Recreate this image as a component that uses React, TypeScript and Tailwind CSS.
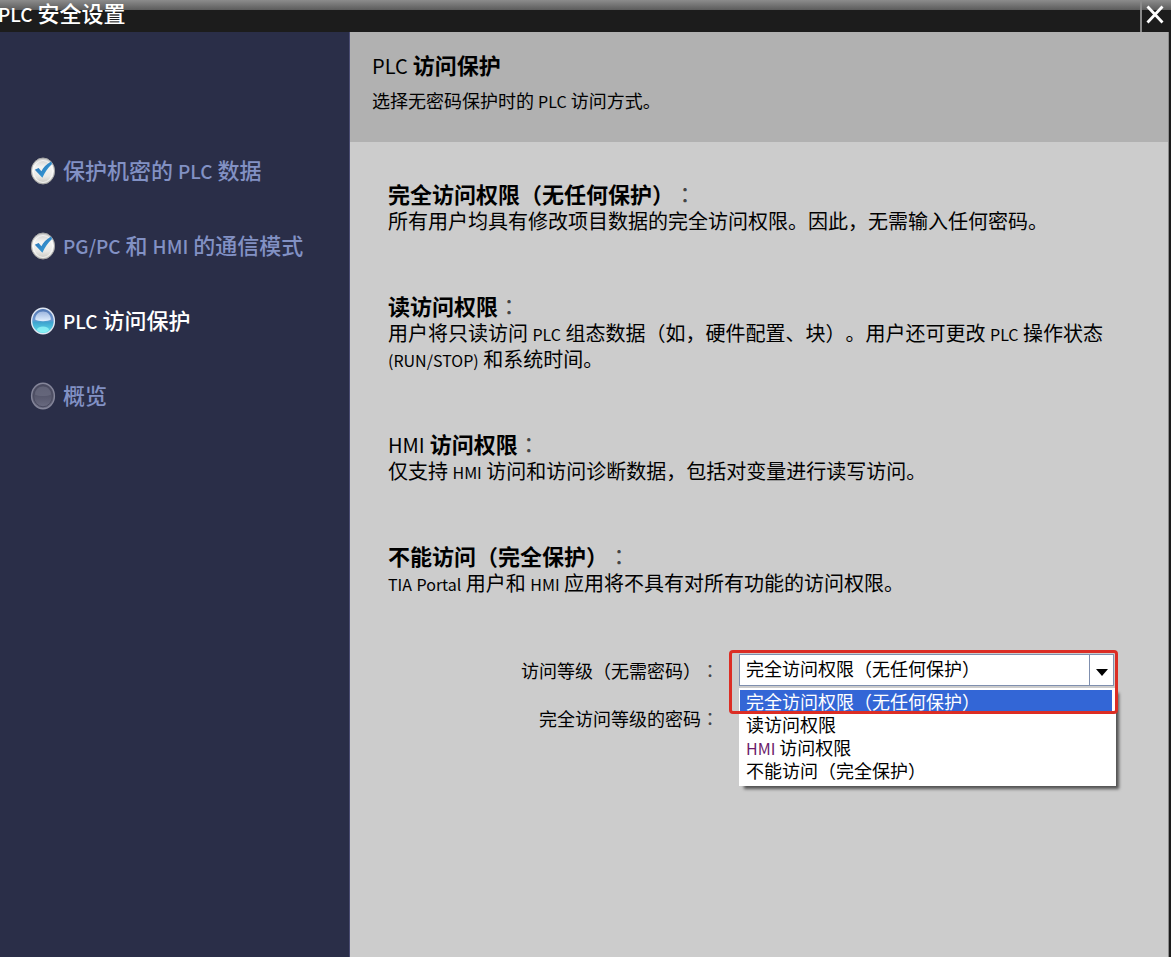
import { useState } from 'react'
import type { ReactNode } from 'react'

type StepState = 'done' | 'current' | 'pending'

const steps: { label: string; state: StepState }[] = [
  { label: '保护机密的 PLC 数据', state: 'done' },
  { label: 'PG/PC 和 HMI 的通信模式', state: 'done' },
  { label: 'PLC 访问保护', state: 'current' },
  { label: '概览', state: 'pending' },
]

const sections = [
  {
    title: '完全访问权限（无任何保护）：',
    text: '所有用户均具有修改项目数据的完全访问权限。因此，无需输入任何密码。',
  },
  {
    title: '读访问权限：',
    text: '用户将只读访问 PLC 组态数据（如，硬件配置、块）。用户还可更改 PLC 操作状态 (RUN/STOP) 和系统时间。',
  },
  {
    title: 'HMI 访问权限：',
    text: '仅支持 HMI 访问和访问诊断数据，包括对变量进行读写访问。',
  },
  {
    title: '不能访问（完全保护）：',
    text: 'TIA Portal 用户和 HMI 应用将不具有对所有功能的访问权限。',
  },
]

const levels = [
  '完全访问权限（无任何保护）',
  '读访问权限',
  'HMI 访问权限',
  '不能访问（完全保护）',
]

// Latin words are set smaller than the Chinese text, colons are centred in their cell
function Mixed({ text, latin }: { text: string; latin: string }) {
  const parts: ReactNode[] = text.split(/([A-Za-z()/]+|：)/).map((part, i) => {
    if (part === '：') {
      return (
        <span key={i} className="font-['Noto_Sans_CJK_TC',sans-serif] leading-none font-normal text-[#444]">
          {part}
        </span>
      )
    }
    if (/^[A-Za-z()/]+$/.test(part)) {
      return (
        <span key={i} className={latin}>
          {part}
        </span>
      )
    }
    return part
  })
  return <>{parts}</>
}

function StepIcon({ state }: { state: StepState }) {
  return (
    <svg viewBox="0 0 26 28" className="h-7 w-[26px] shrink-0" aria-hidden="true">
      <defs>
        <linearGradient id="done-fill" x1="0" y1="0" x2="0" y2="1">
          <stop offset="0" stopColor="#c9c9c9" />
          <stop offset="0.35" stopColor="#f4f4f2" />
          <stop offset="0.7" stopColor="#e9e9e6" />
          <stop offset="1" stopColor="#c4c4be" />
        </linearGradient>
        <linearGradient id="current-fill" x1="0" y1="0" x2="0" y2="1">
          <stop offset="0" stopColor="#4f74b0" />
          <stop offset="0.45" stopColor="#6d98d2" />
          <stop offset="0.55" stopColor="#3fa3cf" />
          <stop offset="1" stopColor="#5fe6ee" />
        </linearGradient>
        <linearGradient id="current-shine" x1="0" y1="0" x2="0" y2="1">
          <stop offset="0" stopColor="#9db6de" />
          <stop offset="1" stopColor="#e2f0ff" />
        </linearGradient>
        <linearGradient id="pending-fill" x1="0" y1="0" x2="0" y2="1">
          <stop offset="0" stopColor="#4c4d62" />
          <stop offset="0.5" stopColor="#56576c" />
          <stop offset="1" stopColor="#6d6e84" />
        </linearGradient>
        <linearGradient id="check-fill" x1="0" y1="0" x2="1" y2="1">
          <stop offset="0" stopColor="#2c6fb3" />
          <stop offset="1" stopColor="#35a3dd" />
        </linearGradient>
      </defs>
      {state === 'done' && (
        <>
          <ellipse cx="13" cy="14" rx="11.6" ry="13" fill="url(#done-fill)" stroke="#a5a5a5" strokeWidth="1" />
          <ellipse cx="13" cy="14.5" rx="9.6" ry="11" fill="none" stroke="#ffffff" strokeOpacity="0.7" />
          <path d="M4.8 12.8 L8.6 11 L11.4 14.2 C13.4 10.6 16 7.6 21.2 4.6 L22 7 C17.8 10.8 15 15 12.4 20.8 Z" fill="url(#check-fill)" />
        </>
      )}
      {state === 'current' && (
        <>
          <ellipse cx="13" cy="14" rx="11.4" ry="12.8" fill="url(#current-fill)" stroke="#dfe6f2" strokeWidth="1.4" />
          <path d="M5.2 12.5 C5.2 7.6 8.4 4.4 13 4.4 C17.6 4.4 20.8 7.6 20.8 12.5 C18 14.8 8 14.8 5.2 12.5 Z" fill="url(#current-shine)" />
          <ellipse cx="13" cy="22.5" rx="6" ry="3" fill="#9bfbfb" fillOpacity="0.7" />
        </>
      )}
      {state === 'pending' && (
        <>
          <ellipse cx="13" cy="14" rx="11.4" ry="12.8" fill="url(#pending-fill)" stroke="#85869a" strokeWidth="1.4" />
          <ellipse cx="13" cy="14" rx="9.4" ry="10.8" fill="none" stroke="#4a4b60" strokeWidth="1" />
          <path d="M5 12.5 C5 8 8.5 4.6 13 4.6 C17.5 4.6 21 8 21 12.5 C18 14.6 8 14.6 5 12.5 Z" fill="#74758a" fillOpacity="0.5" />
        </>
      )}
    </svg>
  )
}

function TitleBar() {
  return (
    <header className="flex h-8 items-stretch justify-between bg-[linear-gradient(#8c8c8c_0px,#5c5c5c_10px,#1c1c1c_10px)]">
      <h1 className="-ml-0.5 text-[22px] leading-6 font-medium whitespace-nowrap text-white">
        <Mixed text="PLC 安全设置" latin="text-[19px]/none" />
      </h1>
      <button
        type="button"
        aria-label="关闭"
        className="flex w-[31px] items-center justify-center border-l-2 border-[#8a8a8a] pr-1 pb-0.5 text-white"
      >
        <svg viewBox="0 0 18 20" className="h-5 w-[18px]" fill="none" stroke="currentColor" strokeWidth="2.8">
          <path d="M1.5 1.5 L16.5 17.5 M16.5 1.5 L1.5 17.5" />
        </svg>
      </button>
    </header>
  )
}

function Sidebar() {
  return (
    <nav className="w-[350px] shrink-0 border-r border-[#4a4c72] bg-[#2a2e48] pt-[123px] pl-[30px]">
      <ul className="space-y-[43px]">
        {steps.map((step) => (
          <li key={step.label}>
            <button
              type="button"
              aria-current={step.state === 'current' ? 'step' : undefined}
              className={`flex h-8 items-center gap-[7px] text-[22px] leading-7 font-medium whitespace-nowrap ${
                step.state === 'current' ? 'text-white' : 'text-[#8291c4]'
              }`}
            >
              <StepIcon state={step.state} />
              <span className="pb-1">
                <Mixed text={step.label} latin="text-[19px]/none" />
              </span>
            </button>
          </li>
        ))}
      </ul>
    </nav>
  )
}

function AccessForm() {
  const [level, setLevel] = useState(levels[0])
  const [password, setPassword] = useState('')

  return (
    <form className="grid grid-cols-[331px_1fr] gap-x-5 gap-y-4 pt-0.5 text-lg leading-6">
      <label htmlFor="level" className="flex h-8 items-center justify-end">
        <span>
          <Mixed text="访问等级（无需密码）：" latin="text-base/none" />
        </span>
      </label>
      <div className="relative">
        <select
          id="level"
          value={level}
          onChange={(e) => setLevel(e.target.value)}
          className="h-8 w-full appearance-none border border-[#7f8fae] bg-white pr-8 pb-1 pl-1.5 text-lg leading-6 text-black outline-none"
        >
          {levels.map((item) => (
            <option key={item} value={item}>
              {item}
            </option>
          ))}
        </select>
        <span className="pointer-events-none absolute inset-y-0 right-0 flex w-[25px] items-center justify-center border border-[#7f8fae]">
          <svg viewBox="0 0 12 7" className="mt-1 h-[7px] w-3" aria-hidden="true">
            <path d="M0 0 H12 L6 7 Z" fill="#000" />
          </svg>
        </span>

        {/* 下拉列表 */}
        <ul
          role="listbox"
          className="absolute top-[34px] -right-0.5 left-0 z-10 bg-white pt-0.5 pb-1 leading-[23px] shadow-[4px_4px_3px_-1px_rgba(0,0,0,0.6)]"
        >
          {levels.map((item) => (
            <li
              key={item}
              role="option"
              aria-selected={item === level}
              onClick={() => setLevel(item)}
              className={`mr-1 ml-px cursor-default pl-1.5 whitespace-nowrap ${
                item === level ? 'bg-[#3366d6] text-white' : 'text-black'
              }`}
            >
              <Mixed text={item} latin="text-base/none text-[#6b1a6b]" />
            </li>
          ))}
        </ul>
        <div className="pointer-events-none absolute -top-1 -right-1 -left-2.5 z-20 h-16 rounded-sm border-3 border-[#dc2d24]" />
      </div>

      <label htmlFor="password" className="flex h-8 items-center justify-end">
        <span>
          <Mixed text="完全访问等级的密码：" latin="text-base/none" />
        </span>
      </label>
      <input
        id="password"
        type="password"
        value={password}
        onChange={(e) => setPassword(e.target.value)}
        className="h-8 w-full border border-[#7f8fae] bg-white px-1.5 outline-none"
      />
    </form>
  )
}

export default function App() {
  return (
    <div className="flex min-h-screen flex-col bg-[#cccccc] font-['Noto_Sans_CJK_SC',sans-serif] text-black [text-spacing-trim:space-all]">
      <TitleBar />
      <div className="flex grow border-r-2 border-[#1c1c1c]">
        <Sidebar />
        <main className="min-w-0 grow border-r border-[#8c8c8c]">
          <div className="h-[110px] bg-[#b1b1b1] pt-4 pl-[22px]">
            <h2 className="text-[22px] leading-8 font-bold">
              <Mixed text="PLC 访问保护" latin="text-xl/none font-normal" />
            </h2>
            <p className="text-lg leading-10">
              <Mixed text="选择无密码保护时的 PLC 访问方式。" latin="text-base/none" />
            </p>
          </div>
          <div className="space-y-14 pt-9 pr-[54px] pl-[38px]">
            {sections.map((section) => (
              <section key={section.title}>
                <h3 className="text-[22px] leading-[30px] font-bold">
                  <Mixed text={section.title} latin="text-xl/none font-normal" />
                </h3>
                <p className="text-xl leading-[26px]">
                  <Mixed text={section.text} latin="text-base/none" />
                </p>
              </section>
            ))}
            <AccessForm />
          </div>
        </main>
      </div>
    </div>
  )
}
